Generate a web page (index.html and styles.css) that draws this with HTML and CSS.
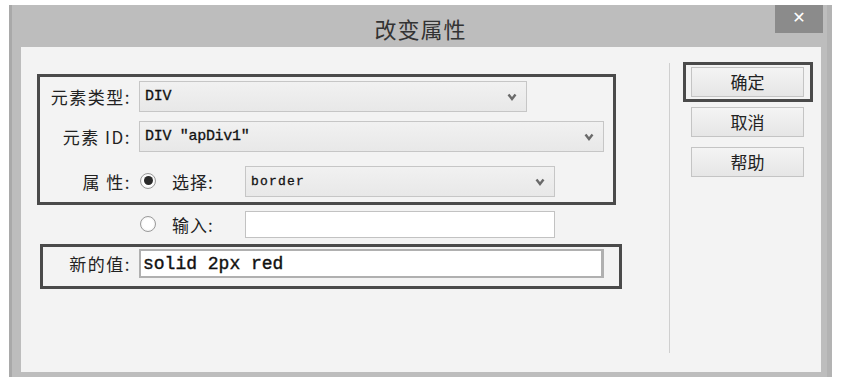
FILE: index.html
```html
<!DOCTYPE html>
<html lang="zh">
<head>
<meta charset="utf-8">
<title>改变属性</title>
<link rel="stylesheet" href="styles.css">
</head>
<body>
<div class="window">
  <div class="titlebar">
    <span class="spacer"></span>
    <span class="title">改变属性</span>
    <span class="close">✕</span>
  </div>
  <div class="content">
    <div class="left">
      <div class="group g1">
        <div class="row r1">
          <span class="label">元素类型:</span>
          <div class="select s1"><span class="val">DIV</span><svg class="chev" width="10" height="8" viewBox="0 0 10 8"><polyline points="1.5,1.5 5,6 8.5,1.5" fill="none" stroke="#6a6a6a" stroke-width="2.4"/></svg></div>
        </div>
        <div class="row r2">
          <span class="label">元素 ID:</span>
          <div class="select s2"><span class="val">DIV "apDiv1"</span><svg class="chev" width="10" height="8" viewBox="0 0 10 8"><polyline points="1.5,1.5 5,6 8.5,1.5" fill="none" stroke="#6a6a6a" stroke-width="2.4"/></svg></div>
        </div>
        <div class="row r3">
          <span class="label">属 性:</span>
          <span class="radio checked"></span>
          <span class="opt">选择:</span>
          <div class="select s3"><span class="val small">border</span><svg class="chev" width="10" height="8" viewBox="0 0 10 8"><polyline points="1.5,1.5 5,6 8.5,1.5" fill="none" stroke="#6a6a6a" stroke-width="2.4"/></svg></div>
        </div>
      </div>
      <div class="row r4">
        <span class="label"></span>
        <span class="radio"></span>
        <span class="opt">输入:</span>
        <div class="input i1"></div>
      </div>
      <div class="group g2">
        <div class="row r5">
          <span class="label">新的值:</span>
          <div class="input i2"><span class="big">solid 2px red</span></div>
        </div>
      </div>
    </div>
    <div class="sep"></div>
    <div class="right">
      <div class="focus"><div class="btn">确定</div></div>
      <div class="btn b2">取消</div>
      <div class="btn b3">帮助</div>
    </div>
  </div>
</div>
</body>
</html>
```

FILE: styles.css
```css
* { box-sizing: border-box; }
html, body { margin: 0; padding: 0; background: #ffffff; }
body {
  font-family: "Noto Sans CJK SC", "Noto Sans", sans-serif;
  color: #222;
}
.window {
  margin: 5px 0 0 9px;
  width: 823px;
  height: 372px;
  background: #bdbdbd;
  border-left: 3px solid #a9a9a9;
  border-right: 5px solid #b3b3b3;
  display: flex;
  flex-direction: column;
}
.titlebar {
  height: 42px;
  display: grid;
  grid-template-columns: 1fr auto 1fr;
  align-items: start;
}
.title {
  font-size: 22px;
  line-height: 26px;
  padding-top: 10px;
  color: #333;
  letter-spacing: 1px;
  margin-left: 2px;
}
.close {
  justify-self: end;
  margin-right: 4px;
  width: 48px;
  height: 28px;
  background: #8b8b8b;
  color: #fff;
  font-family: "DejaVu Sans", sans-serif;
  font-size: 16px;
  font-weight: bold;
  line-height: 26px;
  text-align: center;
}
.content {
  margin: 0 6px 0 9px;
  height: 325px;
  background: #f3f3f3;
  display: flex;
}
.left {
  width: 648px;
  padding-top: 27px;
}
.group {
  border: 3px solid #4a4a4a;
}
.g1 {
  margin-left: 16px;
  width: 579px;
  height: 131px;
  padding-top: 4px;
}
.row {
  display: flex;
  align-items: center;
}
.label {
  width: 91px;
  text-align: right;
  font-size: 17px;
  letter-spacing: 1.5px;
  color: #222;
  flex: none;
}
.r2 { margin-top: 9px; }
.r3 { margin-top: 14px; }
.select {
  height: 31px;
  margin-left: 8px;
  border: 1px solid #c6c6c6;
  background: linear-gradient(#f1f1f1, #e8e8e8);
  display: flex;
  align-items: center;
  justify-content: space-between;
  padding: 0 9px 0 5px;
}
.s1 { width: 388px; }
.s2 { width: 465px; }
.s3 { width: 310px; margin-left: 0; }
.val {
  font-family: "Liberation Mono", monospace;
  font-size: 15px;
  color: #111;
  letter-spacing: -0.3px;
  -webkit-text-stroke: 0.3px #111;
}
.val.small {
  font-size: 13px;
  letter-spacing: 1.2px;
}
.radio {
  width: 16px;
  height: 16px;
  border-radius: 50%;
  border: 1px solid #9a9a9a;
  background: radial-gradient(circle, #ffffff 50%, #e4e4e4 100%);
  margin-left: 9px;
  margin-right: 16px;
  flex: none;
  display: flex;
  align-items: center;
  justify-content: center;
  position: relative;
  top: -1px;
}
.radio.checked::after {
  content: "";
  width: 9px;
  height: 9px;
  border-radius: 50%;
  background: #2a2a2a;
}
.opt {
  width: 73px;
  font-size: 17px;
  letter-spacing: 1px;
  color: #222;
  flex: none;
}
.r4 {
  margin: 6px 0 0 19px;
}
.input {
  background: #ffffff;
  border: 1px solid #c2c2c2;
}
.i1 {
  width: 310px;
  height: 27px;
}
.g2 {
  margin: 6px 0 0 19px;
  width: 582px;
  height: 45px;
  padding-top: 2px;
}
.g2 .label { width: 88px; }
.i2 {
  width: 465px;
  height: 29px;
  margin-left: 8px;
  border: 2px solid #b0b0b0;
  border-right-width: 3px;
  display: flex;
  align-items: center;
  padding-left: 2px;
}
.big {
  font-family: "Liberation Mono", monospace;
  font-size: 18px;
  color: #111;
  -webkit-text-stroke: 0.4px #111;
}
.sep {
  width: 1px;
  margin-top: 16px;
  height: 290px;
  background: #cfcfcf;
  flex: none;
}
.right {
  padding: 15px 0 0 13px;
  display: flex;
  flex-direction: column;
  align-items: flex-start;
}
.focus {
  width: 130px;
  height: 40px;
  border: 3px solid #4a4a4a;
  padding: 2px 0 0 5px;
}
.btn {
  width: 113px;
  height: 30px;
  border: 1px solid #c4c4c4;
  background: linear-gradient(#f4f4f4, #e6e6e6);
  font-size: 17px;
  line-height: 27px;
  text-align: center;
  color: #222;
}
.b2 { margin: 5px 0 0 8px; }
.b3 { margin: 10px 0 0 8px; }
```
